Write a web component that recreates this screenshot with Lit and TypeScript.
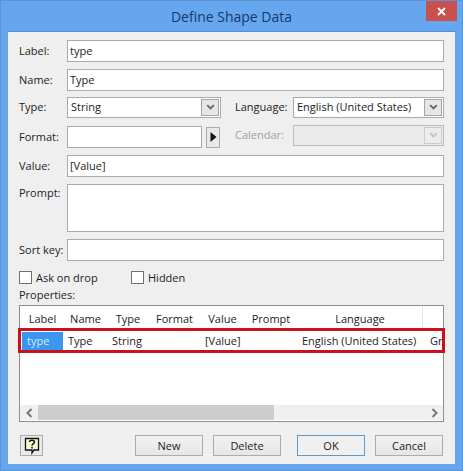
import { LitElement, html, css, svg } from "lit";
import { customElement } from "lit/decorators.js";

const chevron = (c: string) => svg`<svg width="9" height="7" viewBox="0 0 9 7"><path d="M1.2 1.2 L4.5 4.5 L7.8 1.2" fill="none" stroke="${c}" stroke-width="1.8"/></svg>`;
const cols = [
  ["Label", "type", 41, 41],
  ["Name", "Type", 45, 44],
  ["Type", "String", 40, 40],
  ["Format", "", 53, 53],
  ["Value", "[Value]", 43, 43],
  ["Prompt", "", 54, 54],
  ["Language", "English (United States)", 124, 128],
  ["", "Gr", 22, 20],
] as const;

@customElement("app-root")
export class AppRoot extends LitElement {
  static styles = css`
    :host { display: block; width: 463px; height: 471px; font-family: "Open Sans", "Noto Sans", sans-serif; font-size: 11px; color: #1c1c1c; }
    * { box-sizing: border-box; }
    .win { width: 463px; height: 471px; background: #66a6ee; border: 1px solid #5b93d6; padding: 0 7px 6px 7px; display: flex; flex-direction: column; }
    .title { height: 30px; flex: none; display: flex; align-items: center; justify-content: center; position: relative; font-size: 14px; color: #17396b; padding-top: 1px; }
    .close { position: absolute; right: -2px; top: 0; width: 31px; height: 20px; background: #c9504f; color: #fff; display: flex; align-items: center; justify-content: center; }
    .body { flex: 1; background: #efefef; padding: 8px 11px 0 11px; display: flex; flex-direction: column; border-top: 1px solid #4f8fd8; }
    .row { display: flex; align-items: center; flex: none; }
    .lab { width: 48px; flex: none; white-space: nowrap; padding-bottom: 2px; }
    .in { flex: 1; height: 22px; background: #fff; border: 1px solid #aaa; padding: 0 0 2px 2px; display: flex; align-items: center; white-space: nowrap; }
    .sel { height: 21px; background: #fff; border: 1px solid #aaa; padding-left: 3px; padding-right: 1px; display: flex; align-items: center; justify-content: space-between; flex: none; }
    .sel .txt { padding-bottom: 2px; }
    .dd { width: 18px; height: 17px; background: #e6e6e6; border: 1px solid #a5a5a5; display: flex; align-items: center; justify-content: center; }
    .sel.off { background: #ebebeb; border-color: #bbb; }
    .sel.off .dd { background: #ececec; border-color: #ccc; }
    .off-t { color: #a0a0a0; }
    .side { width: 58px; padding-bottom: 2px; }
    .t1 { margin-bottom: 7px; }
    .t6 { margin-bottom: 6px; }
    .split { justify-content: space-between; align-items: flex-start; }
    .half { display: flex; align-items: center; }
    .half.low { margin-top: 1px; }
    .fmt { flex: none; width: 135px; }
    .arrow { width: 14px; height: 21px; margin-left: 4px; background: #e8e8e8; border: 1px solid #aaa; display: flex; align-items: center; justify-content: center; }
    .prompt { align-items: flex-start; }
    .prompt .in { height: 48px; }
    .prompt .lab { padding-top: 1px; }
    .checks { margin-top: 10px; height: 13px; }
    .cb { width: 13px; height: 13px; border: 1px solid #707070; background: #fff; margin-right: 4px; flex: none; }
    .ck { display: flex; align-items: center; }
    .ck.a { width: 112px; }
    .props { margin-top: 2px; height: 18px; display: flex; align-items: center; padding-bottom: 2px; }
    .table { position: relative; margin-top: 1px; height: 117px; border: 1px solid #8e8e8e; background: #fff; flex: none; width: 425px; display: flex; flex-direction: column; }
    .thead, .trow { display: flex; white-space: nowrap; overflow: hidden; flex: none; padding-left: 2px; }
    .thead { height: 26px; align-items: center; }
    .th { text-align: center; flex: none; height: 100%; display: flex; align-items: center; justify-content: center; padding-bottom: 2px; }
    .th.last { border-left: 1px solid #e4e4e4; height: 22px; align-self: flex-start; }
    .trow { height: 18px; align-items: center; }
    .td { flex: none; padding: 0 0 2px 5px; height: 100%; display: flex; align-items: center; overflow: hidden; }
    .td.on { background: #3a96ef; color: #d6e9ff; }
    .grow { flex: 1; }
    .sbar { height: 15px; background: #f0f0f0; margin-bottom: 1px; display: flex; align-items: center; flex: none; }
    .sb-btn { width: 18px; height: 15px; display: flex; align-items: center; justify-content: center; flex: none; }
    .thumb { width: 236px; height: 15px; background: #cdcdcd; flex: none; }
    .red { position: absolute; left: -2px; right: -2px; top: 22px; height: 25px; border: 3px solid #c8101f; pointer-events: none; }
    .foot { display: flex; align-items: center; margin-top: 13px; }
    .help { width: 23px; height: 21px; background: #eaeaea; border: 1px solid #aaa; display: flex; align-items: center; justify-content: center; margin-right: 92px; margin-left: 1px; }
    .btn { width: 68px; height: 21px; background: linear-gradient(#f2f2f2, #e6e6e6); border: 1px solid #acacac; display: flex; align-items: center; justify-content: center; padding-bottom: 1px; }
    .btn.ok { border-color: #5a9bd0; background: #f0f0f0; }
    .m1 { margin-left: 10px; }
    .m2 { margin-left: 16px; }
  `;

  render() {
    return html`<div class="win">
      <div class="title">Define Shape Data
        <div class="close"><svg width="9" height="9" viewBox="0 0 9 9"><path d="M1 1 L8 8 M8 1 L1 8" stroke="#fff" stroke-width="1.8"/></svg></div>
      </div>
      <div class="body">
        <div class="row t1"><div class="lab">Label:</div><div class="in">type</div></div>
        <div class="row t6"><div class="lab">Name:</div><div class="in">Type</div></div>
        <div class="row split t1">
          <div class="half"><div class="lab">Type:</div><div class="sel" style="width:154px"><span class="txt">String</span><div class="dd">${chevron("#666")}</div></div></div>
          <div class="half"><div class="side">Language:</div><div class="sel" style="width:151px"><span class="txt">English (United States)</span><div class="dd">${chevron("#666")}</div></div></div>
        </div>
        <div class="row split t1">
          <div class="half low"><div class="lab">Format:</div><div class="in fmt"></div><div class="arrow"><svg width="7" height="10" viewBox="0 0 7 10"><path d="M0.5 0 L6.5 5 L0.5 10 Z" fill="#111"/></svg></div></div>
          <div class="half"><div class="side off-t">Calendar:</div><div class="sel off" style="width:151px"><span></span><div class="dd">${chevron("#c4c4c4")}</div></div></div>
        </div>
        <div class="row t1"><div class="lab">Value:</div><div class="in">[Value]</div></div>
        <div class="row prompt t1"><div class="lab">Prompt:</div><div class="in"></div></div>
        <div class="row"><div class="lab">Sort key:</div><div class="in"></div></div>
        <div class="row checks">
          <div class="ck a"><div class="cb"></div>Ask on drop</div>
          <div class="ck"><div class="cb"></div>Hidden</div>
        </div>
        <div class="props">Properties:</div>
        <div class="table">
          <div class="thead">${cols.map((c, i) => html`<div class="th ${i === 7 ? "last" : ""}" style="width:${c[2]}px">${c[0]}</div>`)}</div>
          <div class="trow">${cols.map((c, i) => html`<div class="td ${i === 0 ? "on" : ""}" style="width:${c[3]}px">${c[1]}</div>`)}</div>
          <div class="grow"></div>
          <div class="sbar">
            <div class="sb-btn"><svg width="7" height="10" viewBox="0 0 7 10"><path d="M5.5 1 L1.5 5 L5.5 9" fill="none" stroke="#777" stroke-width="2"/></svg></div>
            <div class="thumb"></div>
            <div class="grow"></div>
            <div class="sb-btn"><svg width="7" height="10" viewBox="0 0 7 10"><path d="M1.5 1 L5.5 5 L1.5 9" fill="none" stroke="#777" stroke-width="2"/></svg></div>
          </div>
          <div class="red"></div>
        </div>
        <div class="foot">
          <div class="help"><svg width="16" height="18" viewBox="0 0 16 18"><path d="M1.5 1.5 H14.5 V13 H10 L8 16 V13 H1.5 Z" fill="#fdfbd0" stroke="#111" stroke-width="1.3"/><path d="M5.5 5 C5.5 2.5 10.5 2.5 10.5 5 C10.5 6.7 8 6.7 8 8.6 M8 9.8 V11.4" fill="none" stroke="#111" stroke-width="1.5"/></svg></div>
          <div class="btn">New</div>
          <div class="btn m1">Delete</div>
          <div class="btn ok m2">OK</div>
          <div class="btn m1">Cancel</div>
        </div>
      </div>
    </div>`;
  }
}
